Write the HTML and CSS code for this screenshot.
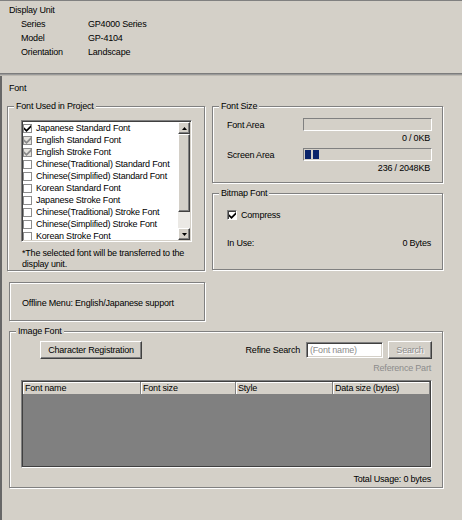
FILE: index.html
```html
<!DOCTYPE html>
<html>
<head>
<meta charset="utf-8">
<link rel="stylesheet" href="styles.css">
</head>
<body>
<section class="unit">
  <div class="title">Display Unit</div>
  <div class="kv">
    <span>Series</span><span>GP4000 Series</span>
    <span>Model</span><span>GP-4104</span>
    <span>Orientation</span><span>Landscape</span>
  </div>
</section>
<div class="sep"></div>
<section class="font">
  <div class="font-title">Font</div>
  <div class="cols">
    <div class="col-left">
      <div class="grp used">
        <span class="cap">Font Used in Project</span>
        <div class="listbox">
          <ul class="items">
            <li><span class="cb"><svg viewBox="0 0 7 7" width="7" height="7"><polygon points="0,2.2 2.5,4.6 7,0 7,2.6 2.5,7 0,4.6" fill="#000"/></svg></span>Japanese Standard Font</li>
            <li><span class="cb dis"><svg viewBox="0 0 7 7" width="7" height="7"><polygon points="0,2.2 2.5,4.6 7,0 7,2.6 2.5,7 0,4.6" fill="#8a8a8a"/></svg></span>English Standard Font</li>
            <li><span class="cb dis"><svg viewBox="0 0 7 7" width="7" height="7"><polygon points="0,2.2 2.5,4.6 7,0 7,2.6 2.5,7 0,4.6" fill="#8a8a8a"/></svg></span>English Stroke Font</li>
            <li><span class="cb"></span>Chinese(Traditional) Standard Font</li>
            <li><span class="cb"></span>Chinese(Simplified) Standard Font</li>
            <li><span class="cb"></span>Korean Standard Font</li>
            <li><span class="cb"></span>Japanese Stroke Font</li>
            <li><span class="cb"></span>Chinese(Traditional) Stroke Font</li>
            <li><span class="cb"></span>Chinese(Simplified) Stroke Font</li>
            <li><span class="cb"></span>Korean Stroke Font</li>
          </ul>
          <div class="vscroll">
            <div class="sbtn"><svg viewBox="0 0 5 3" width="5" height="3"><polygon points="0,3 2.5,0 5,3" fill="#000"/></svg></div>
            <div class="thumb"></div>
            <div class="track"></div>
            <div class="sbtn"><svg viewBox="0 0 5 3" width="5" height="3"><polygon points="0,0 5,0 2.5,3" fill="#000"/></svg></div>
          </div>
        </div>
        <p class="note">*The selected font will be transferred to the<br>display unit.</p>
      </div>
      <div class="offline">Offline Menu: English/Japanese support</div>
    </div>
    <div class="col-right">
      <div class="grp size">
        <span class="cap">Font Size</span>
        <div class="meter">
          <span class="mlabel">Font Area</span>
          <div class="bar"></div>
        </div>
        <div class="mval">0 / 0KB</div>
        <div class="meter second">
          <span class="mlabel">Screen Area</span>
          <div class="bar"><span class="blk"></span><span class="blk"></span></div>
        </div>
        <div class="mval">236 / 2048KB</div>
      </div>
      <div class="grp bitmap">
        <span class="cap">Bitmap Font</span>
        <div class="check-row">
          <span class="cb3d"><svg viewBox="0 0 7 7" width="7" height="7"><polygon points="0,2.2 2.5,4.6 7,0 7,2.6 2.5,7 0,4.6" fill="#000"/></svg></span>
          <span>Compress</span>
        </div>
        <div class="inuse">
          <span>In Use:</span>
          <span class="inuse-val">0 Bytes</span>
        </div>
      </div>
    </div>
  </div>
  <div class="grp image">
    <span class="cap">Image Font</span>
    <div class="toolbar">
      <button class="btn charreg">Character Registration</button>
      <span class="spacer"></span>
      <span class="refine">Refine Search</span>
      <span class="field">(Font name)</span>
      <button class="btn search">Search</button>
    </div>
    <div class="refpart">Reference Part</div>
    <div class="table">
      <div class="thead">
        <span class="th">Font name</span>
        <span class="th">Font size</span>
        <span class="th">Style</span>
        <span class="th">Data size (bytes)</span>
      </div>
      <div class="tbody"></div>
    </div>
    <div class="total">Total Usage: 0 bytes</div>
  </div>
</section>
</body>
</html>
```
FILE: styles.css
```css
* {
  box-sizing: border-box;
}

html,
body {
  margin: 0;
  padding: 0;
}

body {
  width: 462px;
  height: 520px;
  overflow: hidden;
  background: #d4d0c8;
  font-family: "Liberation Sans", Arial, sans-serif;
  font-size: 9px;
  letter-spacing: -0.2px;
  line-height: 12px;
  color: #000;
}

/* Display unit section */
.unit {
  height: 73px;
  border-top: 1px solid #808080;
  padding: 2px 0 0 9px;
  line-height: 14px;
}

.kv {
  display: grid;
  grid-template-columns: 67px auto;
  padding-left: 12px;
}

.sep {
  height: 3px;
  border-top: 1px solid #7c7c7c;
  background: #9a9a9a;
  border-bottom: 1px solid #bdb9b1;
}

/* Font section */
.font {
  height: 444px;
  border-left: 2px solid #676767;
}

.font-title {
  padding: 5px 0 0 7px;
  line-height: 14px;
}

.cols {
  display: flex;
  align-items: flex-start;
  margin-top: 11px;
  padding-left: 5px;
}

.col-right {
  margin-left: 7px;
}

.grp {
  position: relative;
  border: 1px solid #808080;
  box-shadow: inset 1px 1px 0 #fff, 1px 1px 0 #fff;
}

.cap {
  position: absolute;
  top: -7px;
  left: 6px;
  padding: 0 2px;
  background: #d4d0c8;
  line-height: 12px;
  white-space: nowrap;
}

/* Font used in project */
.used {
  width: 198px;
  height: 165px;
  padding: 13px 0 0 13px;
}

.listbox {
  display: flex;
  width: 171px;
  height: 122px;
  border: 1px solid;
  border-color: #808080 #fff #fff #808080;
  box-shadow: inset 1px 1px 0 #404040, inset -1px -1px 0 #d4d0c8;
  padding: 1px;
  background: #fff;
}

.items {
  flex: 1;
  margin: 0;
  padding: 0;
  list-style: none;
  overflow: hidden;
  background: #fff;
}

.items li {
  display: flex;
  align-items: center;
  gap: 4px;
  height: 12px;
  white-space: nowrap;
}

.cb {
  display: flex;
  align-items: center;
  justify-content: center;
  width: 9px;
  height: 9px;
  flex: none;
  border: 1px solid #8c8c8c;
  background: #fff;
}

.cb.dis {
  background: #e4e2dd;
}

.vscroll {
  display: flex;
  flex-direction: column;
  width: 12px;
  flex: none;
}

.sbtn {
  display: flex;
  align-items: center;
  justify-content: center;
  height: 12px;
  background: #d4d0c8;
  border: 1px solid;
  border-color: #fff #404040 #404040 #fff;
  box-shadow: inset -1px -1px 0 #808080;
}

.thumb {
  height: 78px;
  background: #d4d0c8;
  border: 1px solid;
  border-color: #fff #404040 #404040 #fff;
  box-shadow: inset -1px -1px 0 #808080;
}

.track {
  flex: 1;
  background: #ebe9e5;
}

.note {
  margin: 6px 0 0 1px;
  line-height: 11px;
}

.offline {
  display: flex;
  align-items: center;
  width: 196px;
  height: 39px;
  margin: 11px 0 0 2px;
  padding: 2px 0 0 12px;
  border: 1px solid #808080;
  box-shadow: inset 1px 1px 0 #fff, 1px 1px 0 #fff;
}

/* Font size */
.size {
  width: 231px;
  height: 77px;
  padding: 11px 10px 0 14px;
}

.meter {
  display: grid;
  grid-template-columns: 76px 129px;
  align-items: center;
  height: 13px;
}

.meter.second {
  margin-top: 4px;
}

.bar {
  display: flex;
  gap: 2px;
  height: 13px;
  padding: 1px;
  border: 1px solid;
  border-color: #808080 #fff #fff #808080;
  background: #d4d0c8;
}

.blk {
  width: 6px;
  height: 9px;
  background: #0a246a;
}

.mval {
  margin-top: 1px;
  padding-right: 2px;
  text-align: right;
}

/* Bitmap font */
.bitmap {
  width: 231px;
  height: 77px;
  margin-top: 10px;
  padding: 15px 11px 0 14px;
}

.check-row {
  display: flex;
  align-items: center;
  gap: 4px;
  height: 12px;
}

.cb3d {
  display: flex;
  align-items: center;
  justify-content: center;
  width: 10px;
  height: 10px;
  border: 1px solid;
  border-color: #808080 #fff #fff #808080;
  box-shadow: inset 1px 1px 0 #404040;
  background: #fff;
  padding: 1px 0 0 1px;
}

.inuse {
  display: flex;
  justify-content: space-between;
  margin-top: 16px;
}

/* Image font */
.image {
  width: 434px;
  height: 157px;
  margin: 10px 0 0 7px;
  padding: 9px 10px 0 11px;
}

.toolbar {
  display: flex;
  align-items: center;
  height: 18px;
}

.btn {
  height: 18px;
  margin: 0;
  padding: 0;
  font: inherit;
  letter-spacing: inherit;
  color: #000;
  background: #d4d0c8;
  border: 1px solid;
  border-color: #fff #404040 #404040 #fff;
  box-shadow: inset -1px -1px 0 #808080;
}

.charreg {
  width: 102px;
  margin-left: 19px;
}

.spacer {
  flex: 1;
}

.refine {
  margin-right: 6px;
}

.field {
  width: 77px;
  height: 16px;
  padding: 1px 0 0 3px;
  line-height: 12px;
  color: #8c8c8c;
  background: #fff;
  border: 1px solid;
  border-color: #808080 #fff #fff #808080;
  box-shadow: inset 1px 1px 0 #404040, inset -1px -1px 0 #d4d0c8;
}

.search {
  width: 44px;
  margin-left: 5px;
  color: #8c8c8c;
  text-shadow: 1px 1px 0 #fff;
}

.refpart {
  margin-top: 3px;
  padding-right: 1px;
  text-align: right;
  color: #8c8c8c;
}

.table {
  display: flex;
  flex-direction: column;
  height: 88px;
  margin-top: 6px;
  border: 1px solid;
  border-color: #808080 #fff #fff #808080;
  box-shadow: inset 1px 1px 0 #404040, inset -1px -1px 0 #404040;
  padding: 1px;
}

.thead {
  display: grid;
  grid-template-columns: 118px 95px 97px 1fr;
  height: 13px;
}

.th {
  padding-left: 2px;
  line-height: 12px;
  white-space: nowrap;
  background: #d4d0c8;
  border-right: 1px solid #808080;
  border-bottom: 1px solid #808080;
  box-shadow: inset 1px 1px 0 #fff;
}

.tbody {
  flex: 1;
  background: #808080;
}

.total {
  margin-top: 5px;
  padding-right: 1px;
  text-align: right;
}
```
